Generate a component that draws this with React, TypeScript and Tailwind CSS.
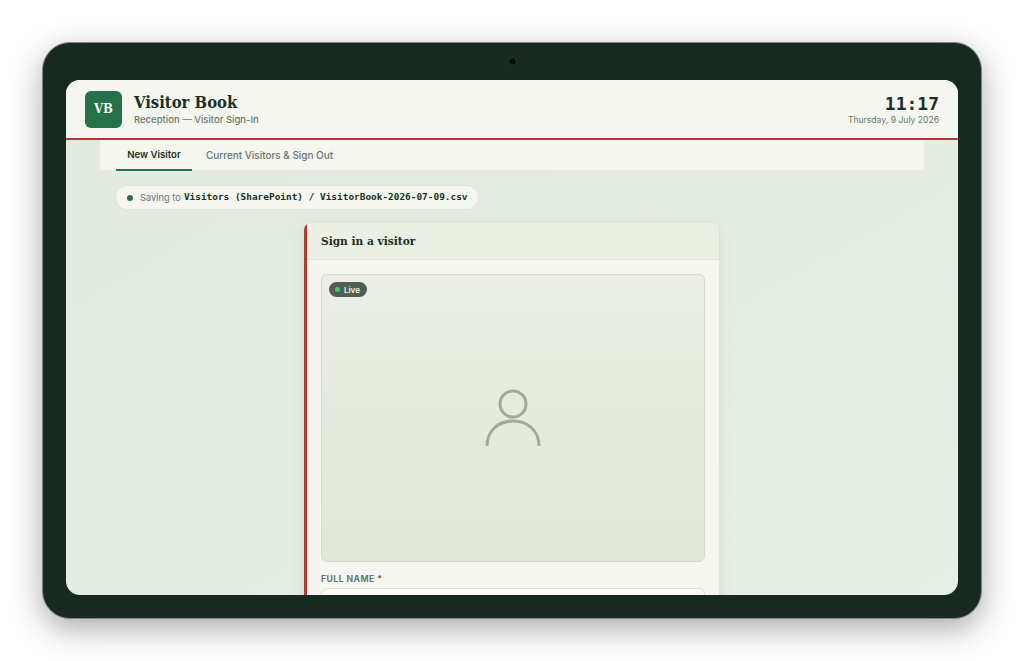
import React from 'react';

const tabs = ['New Visitor', 'Current Visitors & Sign Out'];

const App = () => {
  return (
    <div className="w-[1024px] h-[661px] overflow-hidden bg-white pt-[42px] pl-[42px] font-['Inter',sans-serif]">
      <div className="relative w-[940px] h-[577px] rounded-[28px] bg-[#182a1f] border border-[#7d8a82] pt-[37px] pl-[23px] shadow-[0_10px_32px_rgba(0,0,0,0.34)]">
        {/* camera */}
        <div className="absolute left-[465px] top-[14px] w-[9px] h-[9px] rounded-full bg-[#0a0f0c] border border-[#2c3a31]" />

        <div className="w-[892px] h-[515px] rounded-[14px] overflow-hidden bg-gradient-to-br from-[#e3ebe1] to-[#e8efe6] flex flex-col">
          <header className="h-[60px] shrink-0 bg-[#f5f6f0] border-b-2 border-[#b23b30] flex items-center justify-between pl-[19px] pr-[19px]">
            <div className="flex items-center gap-[12px]">
              <div className="w-[37px] h-[37px] rounded-[6px] bg-[#26704a] flex items-center justify-center text-[#f5f6f0] text-[13px] font-bold font-['DejaVu_Serif_Condensed',serif]">
                VB
              </div>
              <div>
                <div className="text-[16.5px] leading-[21px] font-bold text-[#1a3024] font-['DejaVu_Serif_Condensed',serif]">Visitor Book</div>
                <div className="text-[9.5px] leading-[13px] font-medium text-[#68776d]">Reception — Visitor Sign-In</div>
              </div>
            </div>
            <div className="text-right">
              <div className="text-[18px] leading-[21px] font-bold text-[#1a3024] font-['DejaVu_Sans_Mono',monospace]">11:17</div>
              <div className="text-[8.6px] leading-[12px] text-[#68776d]">Thursday, 9 July 2026</div>
            </div>
          </header>

          <div className="flex-1 min-h-0 px-[34px]">
            <nav className="h-[30px] bg-[#f5f6f0] flex pl-[16px]">
              {tabs.map((tab, i) => (
                <div
                  key={tab}
                  className={
                    i === 0
                      ? 'h-[31px] w-[76px] pt-[1px] flex items-center justify-center text-[9.6px] font-semibold text-[#1a3024] border-b-2 border-[#26704a]'
                      : 'h-[30px] pl-[14px] flex items-center text-[9.95px] font-medium text-[#68776d]'
                  }
                >
                  {tab}
                </div>
              ))}
            </nav>

            <div className="pl-[16px] pt-[16px]">
              <div className="w-[362px] h-[23px] rounded-full bg-[#f5f6f0] flex items-center pl-[11px] shadow-[0_0_0_1px_rgba(40,70,50,0.03)]">
                <span className="w-[6px] h-[6px] rounded-full bg-[#26704a] mr-[7px]" />
                <span className="text-[9.3px] text-[#68776d] mr-[3px]">Saving to</span>
                <span className="text-[9.43px] font-bold text-[#1a3024] font-['DejaVu_Sans_Mono',monospace]">Visitors (SharePoint) / VisitorBook-2026-07-09.csv</span>
              </div>
            </div>

            <div className="w-[415px] ml-[204px] mt-[14px] rounded-[7px] bg-[#f5f6f0] border-l-[3px] border-[#b23b30] shadow-[0_2px_14px_rgba(40,70,50,0.1)]">
              <div className="h-[37px] bg-[#ecefe4] border-b border-[#e2e5d9] rounded-tr-[7px] flex items-center pl-[14px] pt-[1px] text-[11.8px] font-bold text-[#1a3024] font-['DejaVu_Serif_Condensed',serif]">
                Sign in a visitor
              </div>
              <div className="px-[14px] pt-[14px]">
                <div className="relative h-[288px] rounded-[6px] border border-[#d6d9ca] bg-gradient-to-b from-[#ecefe5] to-[#e0e6d8] flex items-center justify-center">
                  <div className="absolute left-[7px] top-[7px] h-[15px] w-[38px] pl-[6px] rounded-full bg-[#4f5f54] flex items-center gap-[4px]">
                    <span className="w-[5px] h-[5px] rounded-full bg-[#3ecb6c]" />
                    <span className="text-[8px] font-semibold text-[#f5f6f0]">Live</span>
                  </div>
                  <svg width="60" height="60" viewBox="0 0 60 60" fill="none" stroke="#9dab98" strokeWidth="3" className="mb-[1px]">
                    <circle cx="30" cy="16" r="13" />
                    <path d="M4 58 C4 42 16 33 30 33 C44 33 56 42 56 58" />
                  </svg>
                </div>
                <div className="mt-[11px] text-[8.7px] leading-[12px] font-bold tracking-[0.05em] text-[#68776d]">
                  FULL NAME <span className="text-[#b23b30]">*</span>
                </div>
                <div className="mt-[3px] h-[32px] rounded-[6px] border border-[#dcdfd2] bg-[#fafbf7]" />
              </div>
            </div>
          </div>
        </div>
      </div>
    </div>
  );
};

export default App;
